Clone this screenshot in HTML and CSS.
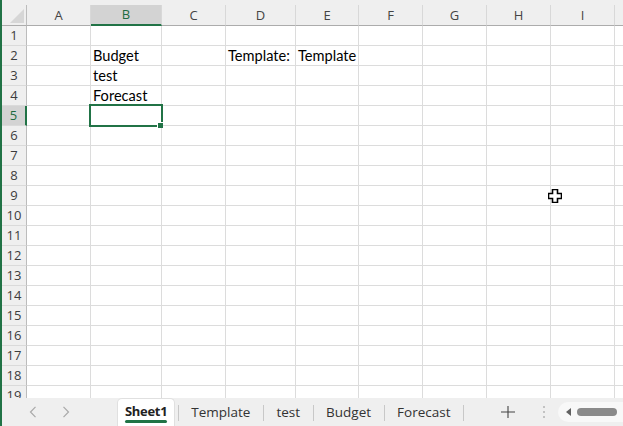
FILE: index.html
```html
<!DOCTYPE html>
<html lang="en">
<head>
<meta charset="utf-8">
<title>Sheet1</title>
<link rel="stylesheet" href="styles.css">
</head>
<body>
<div class="app">
  <div class="sheet">
    <div class="grid">
      <div class="hd corner"></div><div class="hd">A</div><div class="hd sel">B</div><div class="hd">C</div><div class="hd">D</div><div class="hd">E</div><div class="hd">F</div><div class="hd">G</div><div class="hd">H</div><div class="hd">I</div><div class="hd"></div>

      <div class="rh">1</div><div class="c"></div><div class="c"></div><div class="c"></div><div class="c"></div><div class="c"></div><div class="c"></div><div class="c"></div><div class="c"></div><div class="c"></div><div class="c"></div>
      <div class="rh">2</div><div class="c"></div><div class="c">Budget</div><div class="c"></div><div class="c">Template:</div><div class="c">Template</div><div class="c"></div><div class="c"></div><div class="c"></div><div class="c"></div><div class="c"></div>
      <div class="rh">3</div><div class="c"></div><div class="c">test</div><div class="c"></div><div class="c"></div><div class="c"></div><div class="c"></div><div class="c"></div><div class="c"></div><div class="c"></div><div class="c"></div>
      <div class="rh">4</div><div class="c"></div><div class="c">Forecast</div><div class="c"></div><div class="c"></div><div class="c"></div><div class="c"></div><div class="c"></div><div class="c"></div><div class="c"></div><div class="c"></div>
      <div class="rh sel">5</div><div class="c"></div><div class="c active"></div><div class="c"></div><div class="c"></div><div class="c"></div><div class="c"></div><div class="c"></div><div class="c"></div><div class="c"></div><div class="c"></div>
      <div class="rh">6</div><div class="c"></div><div class="c"></div><div class="c"></div><div class="c"></div><div class="c"></div><div class="c"></div><div class="c"></div><div class="c"></div><div class="c"></div><div class="c"></div>
      <div class="rh">7</div><div class="c"></div><div class="c"></div><div class="c"></div><div class="c"></div><div class="c"></div><div class="c"></div><div class="c"></div><div class="c"></div><div class="c"></div><div class="c"></div>
      <div class="rh">8</div><div class="c"></div><div class="c"></div><div class="c"></div><div class="c"></div><div class="c"></div><div class="c"></div><div class="c"></div><div class="c"></div><div class="c"></div><div class="c"></div>
      <div class="rh">9</div><div class="c"></div><div class="c"></div><div class="c"></div><div class="c"></div><div class="c"></div><div class="c"></div><div class="c"></div><div class="c"></div><div class="c"></div><div class="c"></div>
      <div class="rh">10</div><div class="c"></div><div class="c"></div><div class="c"></div><div class="c"></div><div class="c"></div><div class="c"></div><div class="c"></div><div class="c"></div><div class="c"></div><div class="c"></div>
      <div class="rh">11</div><div class="c"></div><div class="c"></div><div class="c"></div><div class="c"></div><div class="c"></div><div class="c"></div><div class="c"></div><div class="c"></div><div class="c"></div><div class="c"></div>
      <div class="rh">12</div><div class="c"></div><div class="c"></div><div class="c"></div><div class="c"></div><div class="c"></div><div class="c"></div><div class="c"></div><div class="c"></div><div class="c"></div><div class="c"></div>
      <div class="rh">13</div><div class="c"></div><div class="c"></div><div class="c"></div><div class="c"></div><div class="c"></div><div class="c"></div><div class="c"></div><div class="c"></div><div class="c"></div><div class="c"></div>
      <div class="rh">14</div><div class="c"></div><div class="c"></div><div class="c"></div><div class="c"></div><div class="c"></div><div class="c"></div><div class="c"></div><div class="c"></div><div class="c"></div><div class="c"></div>
      <div class="rh">15</div><div class="c"></div><div class="c"></div><div class="c"></div><div class="c"></div><div class="c"></div><div class="c"></div><div class="c"></div><div class="c"></div><div class="c"></div><div class="c"></div>
      <div class="rh">16</div><div class="c"></div><div class="c"></div><div class="c"></div><div class="c"></div><div class="c"></div><div class="c"></div><div class="c"></div><div class="c"></div><div class="c"></div><div class="c"></div>
      <div class="rh">17</div><div class="c"></div><div class="c"></div><div class="c"></div><div class="c"></div><div class="c"></div><div class="c"></div><div class="c"></div><div class="c"></div><div class="c"></div><div class="c"></div>
      <div class="rh">18</div><div class="c"></div><div class="c"></div><div class="c"></div><div class="c"></div><div class="c"></div><div class="c"></div><div class="c"></div><div class="c"></div><div class="c"></div><div class="c"></div>
      <div class="rh">19</div><div class="c"></div><div class="c"></div><div class="c"></div><div class="c"></div><div class="c"></div><div class="c"></div><div class="c"></div><div class="c"></div><div class="c"></div><div class="c"></div>
    </div>
    <svg class="cursor" width="14" height="14" viewBox="0 0 14 14"><path d="M4.5 0.5h5v4h4v5h-4v4h-5v-4h-4v-5h4z" fill="#fff" stroke="#000" stroke-width="1.6" stroke-linejoin="miter"/></svg>
  </div>

  <div class="tabbar">
    <div class="nav">
      <svg width="8" height="12" viewBox="0 0 8 12"><path d="M6.5 0.8L1.5 6l5 5.2" fill="none" stroke="#a9a9a9" stroke-width="1.2"/></svg>
      <svg width="8" height="12" viewBox="0 0 8 12"><path d="M1.5 0.8L6.5 6l-5 5.2" fill="none" stroke="#a9a9a9" stroke-width="1.2"/></svg>
    </div>
    <div class="tab active"><span>Sheet1</span><span class="ul"></span></div>
    <span class="sep first"></span>
    <div class="tab">Template</div>
    <span class="sep"></span>
    <div class="tab">test</div>
    <span class="sep"></span>
    <div class="tab">Budget</div>
    <span class="sep"></span>
    <div class="tab">Forecast</div>
    <span class="sep"></span>
    <div class="right">
      <svg class="plus" width="24" height="14" viewBox="0 0 24 14"><path d="M12 1v12M5 7h14" stroke="#444" stroke-width="1.1" fill="none"/></svg>
      <svg class="dots" width="12" height="14" viewBox="0 0 12 14"><circle cx="6" cy="2" r="1" fill="#b3b3b3"/><circle cx="6" cy="7" r="1" fill="#b3b3b3"/><circle cx="6" cy="12" r="1" fill="#b3b3b3"/></svg>
      <div class="track">
        <svg class="arrow" width="5" height="8" viewBox="0 0 5 8"><path d="M5 0v8L0 4z" fill="#616161"/></svg>
        <span class="thumb"></span>
      </div>
    </div>
  </div>
</div>
</body>
</html>
```
FILE: styles.css
```css
html, body {
  margin: 0;
  padding: 0;
}
body {
  width: 623px;
  height: 426px;
  overflow: hidden;
  background: #fff;
  font-family: "Open Sans", "Noto Sans", sans-serif;
}
.app {
  height: 426px;
  box-sizing: border-box;
  border-left: 2px solid #217346;
  display: flex;
  flex-direction: column;
}
.sheet {
  flex: 1;
  min-height: 0;
  overflow: hidden;
  position: relative;
  background: #efefef;
}
.grid {
  display: grid;
  grid-template-columns: 25px 64px 71px 64px 70px 63px 64px 64px 64px 64px 64px;
  grid-template-rows: 26px;
  grid-auto-rows: 20px;
}
.hd {
  margin-top: 5px;
  box-sizing: border-box;
  background: #efefef;
  border-right: 1px solid #d8d8d8;
  border-bottom: 1px solid #acacac;
  text-align: center;
  font-size: 13px;
  line-height: 20px;
  color: #444;
}
.hd.sel {
  background: #d3d3d3;
  color: #1e6b41;
  border-bottom: 2px solid #217346;
  line-height: 19px;
}
.corner {
  position: relative;
  border-right: 1px solid #bcbcbc;
}
.corner::after {
  content: "";
  position: absolute;
  right: 2px;
  bottom: 2px;
  width: 14px;
  height: 14px;
  background: #d6d6d6;
  clip-path: polygon(100% 0, 100% 100%, 0 100%);
}
.rh {
  box-sizing: border-box;
  background: #efefef;
  border-right: 1px solid #bcbcbc;
  border-bottom: 1px solid #dadada;
  text-align: center;
  font-size: 13px;
  line-height: 19px;
  color: #3c3c3c;
}
.rh.sel {
  background: #d3d3d3;
  color: #1e6b41;
  border-right: 2px solid #217346;
}
.c {
  box-sizing: border-box;
  background: #fff;
  border-right: 1px solid #dcdcdc;
  border-bottom: 1px solid #dcdcdc;
  padding-left: 2px;
  font-family: Lato, "Liberation Sans", sans-serif;
  font-size: 14.6px;
  line-height: 19px;
  color: #000;
  white-space: nowrap;
}
.c.active {
  position: relative;
}
.c.active::before {
  content: "";
  position: absolute;
  left: -2px;
  top: -2px;
  right: -2px;
  bottom: -2px;
  border: 2px solid #217346;
}
.c.active::after {
  content: "";
  position: absolute;
  right: -2px;
  bottom: -3px;
  width: 5px;
  height: 5px;
  background: #217346;
  border-left: 1px solid #fff;
  border-top: 1px solid #fff;
}
.cursor {
  position: absolute;
  left: 546px;
  top: 189px;
}
.tabbar {
  flex: none;
  height: 28px;
  background: #efefef;
  display: flex;
  align-items: stretch;
  font-size: 13.5px;
  color: #333;
}
.nav {
  width: 115px;
  flex: none;
  box-sizing: border-box;
  padding-left: 27px;
  display: flex;
  align-items: center;
  gap: 25px;
}
.tab {
  padding: 5px 13px 0 12px;
  line-height: 18px;
  white-space: nowrap;
}
.tab.active {
  box-sizing: border-box;
  background: #fff;
  border: 1px solid #e0e0e0;
  border-bottom: none;
  border-radius: 5px 5px 0 0;
  padding: 3px 7px 0;
  display: flex;
  flex-direction: column;
  align-items: center;
  font-size: 13px;
  font-weight: 700;
  letter-spacing: -0.3px;
  color: #222;
}
.tab .ul {
  align-self: stretch;
  height: 3px;
  margin-top: 0;
  background: #217346;
  border-radius: 2px;
}
.sep {
  width: 1px;
  flex: none;
  background: #c8c8c8;
  margin: 7px 0 5px;
}
.sep.first {
  margin-left: 3px;
}
.right {
  margin-left: auto;
  display: flex;
  align-items: center;
}
.plus {
  display: block;
}
.dots {
  display: block;
  margin-left: 18px;
}
.track {
  margin-left: 8px;
  width: 65px;
  height: 20px;
  box-sizing: border-box;
  background: #f8f8f8;
  border-radius: 10px 0 0 10px;
  display: flex;
  align-items: center;
  padding-left: 8px;
}
.arrow {
  display: block;
}
.thumb {
  margin-left: 6px;
  width: 40px;
  height: 8px;
  border-radius: 4px;
  background: #8a8a8a;
}
```
